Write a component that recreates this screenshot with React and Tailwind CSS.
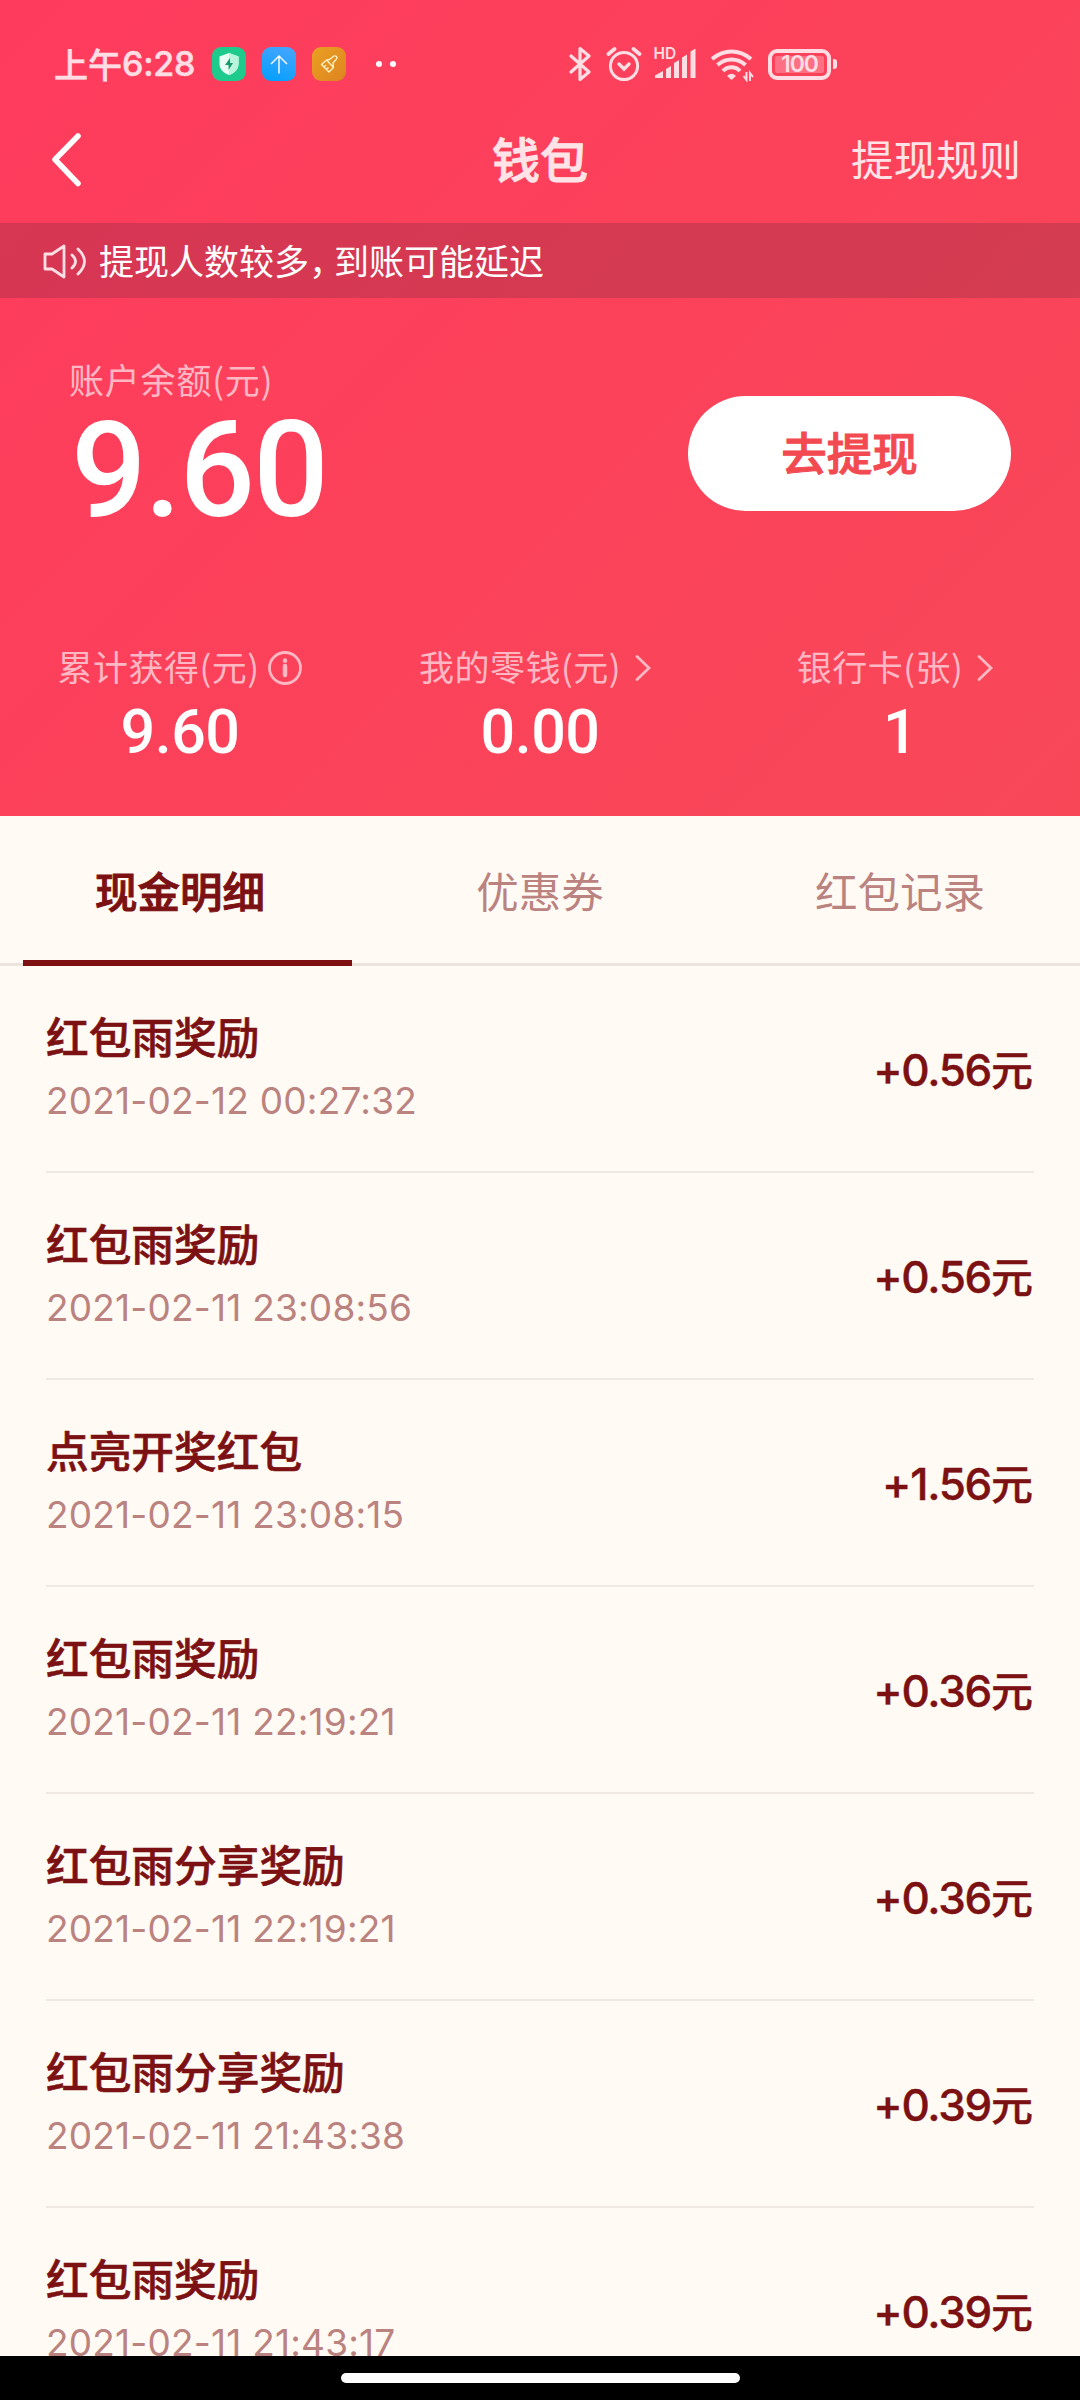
import React, { useState } from "react";

const tabs = ["现金明细", "优惠券", "红包记录"];

const records = [
  { title: "红包雨奖励", time: "2021-02-12 00:27:32", amount: "+0.56" },
  { title: "红包雨奖励", time: "2021-02-11 23:08:56", amount: "+0.56" },
  { title: "点亮开奖红包", time: "2021-02-11 23:08:15", amount: "+1.56" },
  { title: "红包雨奖励", time: "2021-02-11 22:19:21", amount: "+0.36" },
  { title: "红包雨分享奖励", time: "2021-02-11 22:19:21", amount: "+0.36" },
  { title: "红包雨分享奖励", time: "2021-02-11 21:43:38", amount: "+0.39" },
  { title: "红包雨奖励", time: "2021-02-11 21:43:17", amount: "+0.39" }
];

function StatusBar() {
  return (
    <div className="flex h-[128px] items-center pl-[54px] text-[#ffdde3]">
      <div className="flex w-[158px] items-center text-[34px] font-medium leading-none whitespace-nowrap [-webkit-text-stroke:0.6px]">
        <span>上午</span>
        <span className="font-['Inter'] text-[34px] tracking-[-0.2px]">6:28</span>
      </div>
      <div className="flex items-center gap-4">
        <div className="flex size-[34px] items-center justify-center rounded-[9px] bg-[#1ecb8c]">
          <svg className="h-[22px] w-5" viewBox="0 0 20 22">
            <path d="M10 0 19.500 3.500V11c0 5-4 9-9.500 11C4.500 20 .5 16 .5 11V3.500Z" fill="#e9fff6" />
            <path d="M10 0 19.500 3.500V11c0 5-4 9-9.500 11Z" fill="#b9f5dc" />
            <path d="M11 5 6 12h3.500v5L14 10h-3Z" fill="#189b6c" />
          </svg>
        </div>
        <div className="flex size-[34px] items-center justify-center rounded-[9px] bg-linear-[20deg] from-[#009fff] to-[#4aa6ff]">
          <svg className="size-5" viewBox="0 0 20 20" fill="none" stroke="#fff" strokeWidth="1.4">
            <path d="M10 19.500V2M2 10l8-8 8 8" />
          </svg>
        </div>
        <div className="flex size-[34px] items-center justify-center rounded-[9px] bg-gradient-to-br from-[#eaa022] to-[#dd8420]">
          <svg className="size-[18px]" viewBox="0 0 18 18" fill="none" stroke="#fff3c8" strokeWidth="1.3" strokeLinejoin="round">
            <path d="M1.500 9.500 6.500 5l7 7.500L9 17ZM6.500 5l3-.5 4.500-3.500q1.500-.5 2.500.5t0 2.500L13 8l.5 4.500M4 12l2-2M6.500 14.500l2-2" />
          </svg>
        </div>
      </div>
      <div className="ml-[30px] flex gap-2">
        <span className="size-[6px] rounded-full bg-white" />
        <span className="size-[6px] rounded-full bg-white" />
      </div>
      <div className="ml-[173px] flex items-center">
        {/* bluetooth */}
        <svg className="h-[36px] w-[22px]" viewBox="0 0 22 36" fill="none" stroke="currentColor" strokeWidth="3.200" strokeLinejoin="round" strokeLinecap="round">
          <path d="M2 10 20 26 11 33.500V2.500L20 10 2 26" />
        </svg>
        {/* alarm */}
        <svg className="ml-[15px] h-[36px] w-[36px]" viewBox="0 0 36 36" fill="none" stroke="currentColor" strokeWidth="3" strokeLinecap="round">
          <circle cx="18" cy="20" r="13.600" />
          <path d="m13 18 5 5 5-5" strokeWidth="3.400" />
          <path d="m2.500 8 6-5M33.500 8l-6-5" strokeWidth="3.800" />
        </svg>
        {/* mobile signal */}
        <svg className="ml-[12px] h-[36px] w-[42px] overflow-visible" viewBox="0 0 42 36" fill="currentColor">
          <text x="-0.500" y="13" fontSize="15.500" fontFamily="Inter" fontWeight="600">HD</text>
          <path d="M1 32v-2.500L9 25v7ZM12 23l5-3v12h-5ZM20 17l5-3v18h-5ZM28 11.500l5-3V32h-5ZM36.500 5.500l5-3V32h-5Z" />
        </svg>
        {/* wifi */}
        <svg className="ml-[14px] h-[36px] w-[44px]" viewBox="0 0 44 36" fill="none" stroke="currentColor" strokeWidth="4">
          <path d="M2 13Q11 5.500 21.500 5.500T41 13M7.500 19q6-5.500 14-5.500T35.500 19M13 25q3.500-3.800 8.500-3.800t8.500 3.800" />
          <path d="M17 30q4.500-4.500 9 0L21.500 34Z" fill="currentColor" stroke="none" />
          <path d="M36.500 26v8l-3-4M40 35v-8l3 4" strokeWidth="2" />
        </svg>
        {/* battery */}
        <div className="ml-[14px] flex items-center gap-[2px]">
          <div className="flex h-[31px] w-[63px] items-center justify-center rounded-[9px] border-[4px] border-current">
            <span className="flex h-[17px] w-[49px] items-center justify-center rounded-[2px] bg-white/25 font-['Inter'] text-[23px] font-semibold leading-none tracking-[-1px]">100</span>
          </div>
          <span className="h-[10px] w-[4px] rounded-r-[3px] bg-current" />
        </div>
      </div>
    </div>
  );
}

function Chevron() {
  return (
    <svg className="h-[30px] w-[17px]" viewBox="0 0 17 30" fill="none" stroke="currentColor" strokeWidth="2.800" strokeLinecap="round">
      <path d="m2 3.500 12 11.500L2 26.500" />
    </svg>
  );
}

function Stat({ label, value, icon }) {
  return (
    <div className="flex flex-1 flex-col items-center">
      <div className="flex h-[40px] items-center text-[35px] leading-none text-[#ffb8c3]">
        <span className="-mt-[5px] tracking-[0.5px]">{label}</span>
        {icon}
      </div>
      <div className="mt-[9px] font-['Roboto'] text-[61px] font-medium leading-[70px] tracking-[-0.500px] text-white">
        {value}
      </div>
    </div>
  );
}

function RecordRow({ title, time, amount }) {
  return (
    <li className="mx-[46px] flex h-[207px] shrink-0 items-center justify-between border-b-2 border-[#f0e8e2] pr-[1px]">
      <div className="-mt-[1px]">
        <p className="text-[42.700px] font-medium leading-[63px] [-webkit-text-stroke:0.6px]">{title}</p>
        <p className="mt-[2px] font-['Inter'] text-[37px] leading-[63px] tracking-[0.2px] text-[#bb8380]">{time}</p>
      </div>
      <p className="flex items-center pt-[2px] text-[42px] font-medium [-webkit-text-stroke:0.4px]">
        <span className="font-['Inter'] text-[44px] tracking-[-1.300px]">{amount}</span>
        <span className="-mt-[5px]">元</span>
      </p>
    </li>
  );
}

function App() {
  const [activeTab, setActiveTab] = useState(0);

  return (
    <div className="flex h-[2400px] w-[1080px] flex-col overflow-hidden bg-[#fffaf4] font-['Noto_Sans_CJK_SC',sans-serif] text-[#7c1113]">
      <header className="h-[816px] shrink-0 bg-linear-[135deg] from-[#ff3b5d] to-[#f84858]">
        <StatusBar />

        {/* Title bar */}
        <nav className="grid h-[95px] grid-cols-3 items-center pb-[34px] text-[#ffe3e7]">
          <button className="pl-[50px]">
            <svg className="h-[56px] w-[32px]" viewBox="0 0 32 56" fill="none" stroke="#fff" strokeWidth="5.500" strokeLinecap="round" strokeLinejoin="round">
              <path d="M28 5 5 28.500l23 24" />
            </svg>
          </button>
          <h1 className="-mt-[3px] text-center text-[48px] font-medium leading-none [-webkit-text-stroke:1px]">钱包</h1>
          <span className="pr-[59px] text-right text-[42.500px] leading-none">提现规则</span>
        </nav>

        {/* Notice */}
        <div className="flex h-[75px] items-center bg-[#3c1e32]/20 pl-[42px] text-[35px] leading-none text-white">
          <svg className="mr-[11px] h-[38px] w-[46px]" viewBox="0 0 46 38" fill="none" stroke="#ffdfe4" strokeWidth="2.800" strokeLinejoin="round" strokeLinecap="round">
            <path d="M3 12h7L22 4v31L10 27H3Z" />
            <path d="M30 13q7 6.500 0 13M36 7q13 12.500 0 25" />
          </svg>
          <div className="-mt-[3px] flex">
            <span>提现人数较多</span>
            <span className="w-[25px]">，</span>
            <span>到账可能延迟</span>
          </div>
        </div>

        {/* Balance */}
        <section className="flex h-[342px] justify-between pl-[69px] pr-[69px] pt-[60px]">
          <div>
            <p className="-mt-[1px] text-[35px] leading-[44px] tracking-[0.800px] text-[#ffb8c3]">账户余额(元)</p>
            <p className="mt-[5px] pl-[2px] font-['Roboto'] text-[133px] font-medium leading-[130px] tracking-[-2px] text-white">9.60</p>
          </div>
          <button className="mt-[38px] h-[115px] w-[323px] rounded-full bg-white pb-[3px] text-[45.500px] font-medium leading-none text-[#f24a50] [-webkit-text-stroke:1px]">
            去提现
          </button>
        </section>

        {/* Stats */}
        <section className="flex pt-[8px]">
          <Stat
            label="累计获得(元)"
            value="9.60"
            icon={
              <svg className="ml-[7px] size-[36px]" viewBox="0 0 36 36" fill="none" stroke="currentColor" strokeWidth="2.800">
                <circle cx="18" cy="18" r="15.500" />
                <path d="M18 16v9M18 10.500v.2" strokeWidth="4.500" strokeLinecap="round" />
              </svg>
            }
          />
          <Stat label="我的零钱(元)" value="0.00" icon={<span className="ml-[14px] mr-[9px]"><Chevron /></span>} />
          <Stat label="银行卡(张)" value="1" icon={<span className="ml-[14px] mr-[9px]"><Chevron /></span>} />
        </section>
      </header>

      {/* Tabs */}
      <div className="flex h-[150px] shrink-0 border-b-[3px] border-[#ece3dc]">
        {tabs.map((name, index) => (
          <button
            key={name}
            onClick={() => setActiveTab(index)}
            className={
              index === activeTab
                ? "relative flex-1 text-[42.500px] font-medium [-webkit-text-stroke:1px]"
                : "relative flex-1 text-[42.500px] text-[#bb8380]"
            }
          >
            {name}
            {index === activeTab && (
              <span className="absolute -bottom-[3px] left-[23px] h-[6px] w-[329px] bg-[#7f1012]" />
            )}
          </button>
        ))}
      </div>

      <ul className="flex min-h-0 flex-1 flex-col overflow-hidden">
        {records.map((record) => (
          <RecordRow key={record.time + record.title} {...record} />
        ))}
      </ul>

      <footer className="flex h-[44px] shrink-0 items-center justify-center bg-black">
        <span className="h-[10px] w-[399px] rounded-full bg-white" />
      </footer>
    </div>
  );
}

export default App;
